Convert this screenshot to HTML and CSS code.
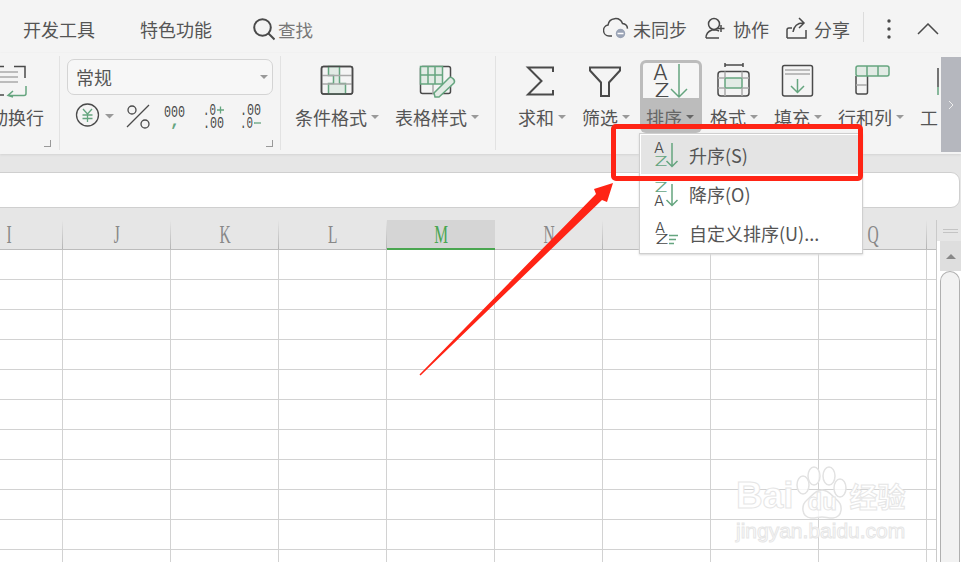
FILE: index.html
```html
<!DOCTYPE html>
<html lang="zh-CN">
<head>
<meta charset="utf-8">
<title>表格 排序</title>
<link rel="stylesheet" href="styles.css">
</head>
<body>
<div class="app">
  <header class="topbar">
    <nav class="tabs">
      <span class="tab">开发工具</span>
      <span class="tab">特色功能</span>
      <span class="search">
        <svg class="ic" width="23" height="26" viewBox="252 15 23 26"><circle cx="262.5" cy="26.5" r="8.3"/><path d="M268.5 32.5l6 6"/></svg>
        <span>查找</span>
      </span>
    </nav>
    <div class="actions">
      <span class="action sync">
        <svg class="ic thin" width="26" height="24" viewBox="603 18 26 24"><path d="M612 37h-3a5.500 5.500 0 0 1-1-10.900 7.500 7.500 0 0 1 14.500-1.500 5.500 5.500 0 0 1 5 5"/><circle class="solid" cx="620.500" cy="34.500" r="5.500"/><path class="knock" d="M617.500 34.500h6"/></svg>
        <span>未同步</span>
      </span>
      <span class="action team">
        <svg class="ic thin" width="21" height="24" viewBox="705 18 21 24"><circle cx="714" cy="25" r="5.500"/><path d="M706 39c0-5 3-7 6-8h4c1 0 2 .5 3 1M706 39h13M721 26v7M717.500 29.500h7"/></svg>
        <span>协作</span>
      </span>
      <span class="action share">
        <svg class="ic thin" width="22" height="24" viewBox="786 18 22 24"><path d="M787 39v-8c0-1 1-2 2-2h3M787 39h19v-8M793 33c1-6 5-9 10-9M799 19l5 5-5 5"/></svg>
        <span>分享</span>
      </span>
      <span class="top-sep"></span>
      <svg class="dots" width="6" height="22" viewBox="0 0 6 22"><circle cx="3" cy="3" r="1.700"/><circle cx="3" cy="11" r="1.700"/><circle cx="3" cy="19" r="1.700"/></svg>
      <svg class="ic thin collapse" width="22" height="12" viewBox="917 22 22 12"><path d="M918 33l10-10 10 10"/></svg>
    </div>
  </header>

  <section class="ribbon">
    <div class="group group-wrap">
      <svg class="ic thin" width="59" height="41" viewBox="0 60 59 41"><path class="mute" d="M0 72h18M0 77h18M0 82h18"/><path d="M14 66.500h11V78M0 66.500h4M0 95h4"/><path class="green" d="M26 86v7.500a2 2 0 0 1-2 2H9M13 91l-5 4.500 5 1.500"/></svg>
      <div class="label-clip"><span>自动换行</span></div>
      <span class="corner"></span>
    </div>

    <div class="group group-number">
      <div class="select"><span class="select-value">常规</span><span class="caret"></span></div>
      <svg class="num-row" width="206" height="32" viewBox="67 100 206 32">
        <circle class="line" cx="87.500" cy="115" r="11"/>
        <path class="green-line" d="M83 109l4.500 5 4.500-5M87.500 114v8M82.500 115h10M82.500 118.500h10"/>
        <path class="tri" d="M105 114h9l-4.500 4.500z"/>
        <circle class="line" cx="132" cy="110" r="4"/><circle class="line" cx="145" cy="124" r="4"/><path class="line" d="M127 127l22-22"/>
        <text class="num" x="164" y="117" textLength="21" lengthAdjust="spacingAndGlyphs">000</text>
        <text class="num comma" x="170" y="126">,</text>
        <text class="num" x="203" y="115" textLength="13" lengthAdjust="spacingAndGlyphs">.0</text>
        <path class="green-line" d="M217 110h7M220.500 106.500v7"/>
        <text class="num" x="203" y="128" textLength="21" lengthAdjust="spacingAndGlyphs">.00</text>
        <text class="num" x="240" y="115" textLength="21" lengthAdjust="spacingAndGlyphs">.00</text>
        <text class="num" x="240" y="128" textLength="13" lengthAdjust="spacingAndGlyphs">.0</text>
        <path class="green-line" d="M254 123h7"/>
      </svg>
      <span class="corner"></span>
    </div>

    <div class="group group-styles">
      <div class="tool auto">
        <svg class="ic thin" width="85" height="41" viewBox="295 60 85 41"><rect x="321.500" y="66.500" width="31" height="27.500" rx="2"/><path class="tint" d="M328.500 66.500h11v9h0v8h6v10.500h-17v-10.500h5v-8h-5z"/><path class="mute" d="M321.500 75.500h31M321.500 84h31"/><rect x="321.500" y="66.500" width="31" height="27.500" rx="2"/></svg>
        <div class="tool-label">条件格式<span class="caret"></span></div>
      </div>
      <div class="tool auto">
        <svg class="ic thin" width="85" height="41" viewBox="394 60 85 41"><rect x="419.500" y="66.500" width="30" height="27" rx="2"/><path class="mute" d="M432 84v10"/><path class="tint" d="M419.500 66.500h22v17.500h-22z"/><path class="green" d="M419.500 75h22M427 66.500v17.500M434 66.500v17.500"/><path class="tint" d="M434 97l-1-4 15-15c2-2 7 2 5 5l-15 14z"/></svg>
        <div class="tool-label">表格样式<span class="caret"></span></div>
      </div>
    </div>

    <div class="tools">
      <div class="tool">
        <svg class="ic thin" width="62" height="41" viewBox="512 60 62 41"><path class="heavy" d="M553 72v-4.500h-25l13.500 13.500-13.500 13.500h25V90"/></svg>
        <div class="tool-label">求和<span class="caret"></span></div>
      </div>
      <div class="tool">
        <svg class="ic thin" width="62" height="41" viewBox="576 60 62 41"><path class="heavy" d="M590 67.500h30v3l-11 12v13.500h-8V82.500l-11-12z"/></svg>
        <div class="tool-label">筛选<span class="caret"></span></div>
      </div>
      <div class="tool active">
        <svg class="ic thin tool-icon" width="62" height="41" viewBox="640 60 62 41"><text class="az" x="653" y="80">A</text><text class="az-z" x="654" y="97" textLength="16" lengthAdjust="spacingAndGlyphs">Z</text><path class="green" d="M679 64v33M671 89l8 8 8-8"/></svg>
        <div class="tool-label">排序<span class="caret"></span></div>
      </div>
      <div class="tool">
        <svg class="ic thin" width="62" height="41" viewBox="704 60 62 41"><path d="M725 65h18M725 63v4M743 63v4"/><rect x="718" y="71.500" width="31" height="24.500" rx="3"/><path class="tint" d="M725 78h17v10h-17z"/><path class="mute" d="M718 78h7M742 78h7M718 88h7M742 88h7M725 71.500v6M742 71.500v6M725 88v8M742 88v8"/></svg>
        <div class="tool-label">格式<span class="caret"></span></div>
      </div>
      <div class="tool">
        <svg class="ic thin" width="62" height="41" viewBox="768 60 62 41"><rect x="782.500" y="65.500" width="30" height="30.500" rx="2"/><path class="mute" d="M785 70h25M785 74h25"/><path class="green" d="M797.500 79v13M791 86l6.500 6.500 6.500-6.500"/></svg>
        <div class="tool-label">填充<span class="caret"></span></div>
      </div>
      <div class="tool wide">
        <svg class="ic thin" width="80" height="41" viewBox="832 60 80 41"><path d="M856 76v16c0 1.500 1 2 2 2h8c1 0 1.500-.5 1.500-2V76"/><path class="mute" d="M856 85h11"/><rect class="tint" x="856" y="66" width="33" height="10" rx="2"/><path class="green" d="M867 66v10M878 66v10"/></svg>
        <div class="tool-label">行和列<span class="caret"></span></div>
      </div>
      <div class="tool last">
        <svg class="ic thin" width="62" height="41" viewBox="914 60 62 41"><path d="M938 68v19"/><path class="green" d="M938 87v8"/></svg>
        <div class="tool-label">工</div>
      </div>
    </div>

    <div class="pager">
      <svg class="ic pager-ic" width="6" height="10" viewBox="0 0 6 10"><path d="M1 1l4 4-4 4"/></svg>
    </div>
  </section>

  <section class="workspace">
    <div class="formula-bar"></div>
    <div class="sheet">
      <div class="sheet-main">
        <div class="col-headers">
          <div class="col-head"><span>I</span></div>
          <div class="col-head"><span>J</span></div>
          <div class="col-head"><span>K</span></div>
          <div class="col-head"><span>L</span></div>
          <div class="col-head selected"><span>M</span></div>
          <div class="col-head"><span>N</span></div>
          <div class="col-head"><span>O</span></div>
          <div class="col-head"><span>P</span></div>
          <div class="col-head"><span>Q</span></div>
        </div>
        <div class="cells"></div>
      </div>
      <aside class="scrollbar">
        <div class="split"><span class="split-mark"></span></div>
        <div class="scroll-track">
          <div class="scroll-up"></div>
          <div class="scroll-thumb"></div>
        </div>
      </aside>
    </div>
  </section>
</div>

<div class="menu">
  <div class="menu-item hover">
    <svg class="ic thin" width="26" height="28" viewBox="0 0 26 28"><text class="az-s" x="0" y="12">A</text><text class="az-t green-text" x="0" y="25" textLength="14" lengthAdjust="spacingAndGlyphs">Z</text><path class="green" d="M18 2v23M12.500 20l5.500 5.500 5.500-5.500"/></svg>
    <span>升序(S)</span>
  </div>
  <div class="menu-item">
    <svg class="ic thin" width="26" height="28" viewBox="0 0 26 28"><text class="az-t green-text" x="0" y="12" textLength="14" lengthAdjust="spacingAndGlyphs">Z</text><text class="az-s" x="0" y="26">A</text><path class="green" d="M18 4v21M12.500 20l5.500 5.500 5.500-5.500"/></svg>
    <span>降序(O)</span>
  </div>
  <div class="menu-item">
    <svg class="ic thin" width="26" height="28" viewBox="0 0 26 28"><text class="az-s" x="1" y="14">A</text><text class="az-t" x="1" y="25" textLength="14" lengthAdjust="spacingAndGlyphs">Z</text><path class="green" d="M15 16.500h9M15 20.500h7M15 24.500h5"/></svg>
    <span>自定义排序(U)...</span>
  </div>
</div>

<div class="callout"></div>
<svg class="arrow" width="961" height="562" viewBox="0 0 961 562"><polygon points="419.500,374.500 596,194 594,189 613,183 607,202 602,200 420.500,375.500"/></svg>

<div class="watermark">
  <div class="wm-logo">
    <span>Bai</span>
    <span class="wm-paw">
      <svg width="52" height="60" viewBox="0 0 52 60"><ellipse cx="18" cy="14" rx="6" ry="9"/><ellipse cx="33" cy="14" rx="6" ry="9"/><ellipse cx="7" cy="23" rx="6" ry="9"/><ellipse cx="44" cy="26" rx="6" ry="9"/><path d="M26 28c-7 0-10 6-15 10-6 5-6 17 4 18 4 .5 7-1 11-1s7 1.500 11 1c10-1 10-13 4-18-5-4-8-10-15-10z"/></svg>
      <span class="wm-du">du</span>
    </span>
    <span class="wm-cn">经验</span>
  </div>
  <div class="wm-url">jingyan.baidu.com</div>
</div>
</body>
</html>
```

FILE: styles.css
```css
* { box-sizing: border-box; }
html, body { margin: 0; height: 562px; overflow: hidden; background: #fff; }
body { font-family: "Noto Sans CJK SC", "Noto Sans", sans-serif; color: #555; position: relative; font-size: 18px; }
svg { display: block; flex: none; }
.app { width: 961px; height: 562px; display: flex; flex-direction: column; overflow: hidden; }

/* icons */
.ic { fill: none; stroke: #4a4a4a; stroke-width: 2; }
.ic.thin { stroke-width: 1.500; }
.ic .heavy { stroke-width: 2; stroke-linejoin: miter; }
.ic .mute { stroke: #a9a9a9; }
.ic .green { stroke: #65a57f; }
.ic .tint { fill: #e2ebe5; stroke: #65a57f; }
.ic .solid { fill: #9aa3b5; stroke: #f4f4f4; }
.ic .knock { stroke: #fff; }
.ic text { stroke: none; fill: #4a4a4a; font-family: "Inter", sans-serif; font-weight: 300; }
.ic .az { font-size: 22px; }
.ic .az-z { font-size: 18px; }
.ic .az-s { font-size: 15px; }
.ic .az-t { font-size: 13px; }
.ic .green-text { fill: #65a57f; }

/* top bar */
.topbar { height: 53px; flex: none; background: #f4f4f4; display: flex; align-items: center; padding: 5px 22px 0 23px; }
.tabs { display: flex; align-items: center; gap: 45px; }
.search { display: flex; align-items: center; gap: 3px; margin-left: -5px; color: #777; font-size: 17.500px; }
.actions { margin-left: auto; display: flex; align-items: center; }
.action { display: flex; align-items: center; }
.sync { gap: 4px; }
.team { gap: 7px; margin-left: 18px; }
.share { gap: 6px; margin-left: 17px; }
.top-sep { width: 1px; height: 30px; background: #dcdcdc; margin: -5px 0 0 13px; }
.dots { fill: #4a4a4a; margin-left: 22px; }
.collapse { margin-left: 25px; }

/* ribbon */
.ribbon { height: 101px; flex: none; background: #f4f4f4; display: flex; align-items: flex-start; padding-top: 3px; box-shadow: 0 1px 2px #d4d4d4; position: relative; z-index: 1; }
.group { height: 94px; border-right: 1px solid #e2e2e2; flex: none; display: flex; }
.group-wrap { width: 60px; flex-direction: column; padding-top: 4px; overflow: hidden; }
.label-clip { height: 32px; display: flex; align-items: center; justify-content: flex-end; padding-right: 15px; white-space: nowrap; }
.corner { width: 7px; height: 7px; border-right: 1px solid #999; border-bottom: 1px solid #999; flex: none; align-self: flex-end; margin: auto 8px 3px 0; }
.group-number { width: 221px; flex-direction: column; padding: 3px 0 0 7px; }
.group-number .corner { margin-right: 7px; }
.select { width: 206px; height: 36px; flex: none; border: 1px solid #d4d4d4; border-radius: 7px; background: #f7f7f7; display: flex; align-items: center; justify-content: space-between; padding: 0 4px 0 8px; }
.select-value { color: #555; }
.num-row { margin-top: 5px; }
.num-row .line { fill: none; stroke: #4a4a4a; stroke-width: 1.300; }
.num-row .green-line { fill: none; stroke: #65a57f; stroke-width: 1.300; }
.num-row .tri { fill: #999; }
.num { font-family: "Liberation Mono", monospace; font-size: 17px; fill: #4a4a4a; }
.num.comma { fill: #65a57f; font-weight: 700; }

.group-styles { width: 215px; padding: 4px 0 0 14px; gap: 14px; }
.tools { flex: 1; min-width: 0; overflow: hidden; display: flex; height: 94px; padding: 4px 0 0 15px; }
.tool { width: 64px; flex: none; padding: 0 1px; height: 73px; display: flex; flex-direction: column; }
.tool.wide { width: 82px; }
.tool.auto { width: auto; padding: 0; }
.tool-label { height: 32px; display: flex; align-items: center; justify-content: center; gap: 4px; padding-right: 2px; white-space: nowrap; color: #555; }
.tool.last .tool-label { justify-content: flex-start; padding: 0 0 0 6px; }
.caret { width: 0; height: 0; flex: none; border: 4.500px solid transparent; border-top-color: #999; border-bottom-width: 0; }
.tool.active .tool-icon { box-shadow: inset 0 0 0 3px #bcbcbc; border-radius: 6px 6px 0 0; background: #f6f6f6; }
.tool.active .tool-label { background: #bcbcbc; border-radius: 0 0 6px 6px; color: #666; }
.tool.active .caret { border-top-color: #666; }
.pager { width: 20px; height: 95px; flex: none; margin-top: 1px; background: #b5b7be; display: flex; align-items: flex-end; justify-content: center; padding-bottom: 42px; }
.ic.pager-ic { stroke: #eee; stroke-width: 1; }

/* sheet */
.workspace { flex: 1; min-height: 0; background: #e6e6e6; padding-top: 18px; display: flex; flex-direction: column; }
.formula-bar { height: 36px; flex: none; margin: 0 1px 0 -10px; background: #fff; border: 1px solid #cfcfcf; border-radius: 9px; }
.sheet { flex: 1; min-height: 0; display: flex; padding-top: 12px; }
.sheet-main { width: 936px; flex: none; display: flex; flex-direction: column; overflow: hidden; }
.col-headers { height: 30px; flex: none; display: flex; margin-left: -45px; border-bottom: 1px solid #bcbcbc; }
.col-head { width: 108px; flex: none; display: flex; justify-content: center; font-family: "Liberation Serif", serif; font-size: 25px; line-height: 29px; color: #888; background: linear-gradient(#e6e6e6, #b4b4b4) right / 1px 100% no-repeat; }
.col-head span { display: block; transform: scaleX(.62); }
.col-head.selected { background: #d5d5d5; color: #4aa650; border-bottom: 2px solid #4aa650; height: 30px; }
.cells { flex: 1; background-color: #fff; background-image: linear-gradient(to left, #d2d2d2 1px, transparent 1px), linear-gradient(to top, #d2d2d2 1px, transparent 1px); background-size: 108px 30px; background-position: -45px 0; }
.scrollbar { flex: 1; min-width: 0; display: flex; flex-direction: column; border-left: 1px solid #cacaca; }
.split { height: 21px; flex: none; display: flex; align-items: center; padding: 0 3px 0 6px; }
.split-mark { flex: 1; height: 4px; border-top: 1px solid #c4c4c4; border-bottom: 1px solid #c4c4c4; }
.scroll-track { flex: 1; min-height: 0; background: #fff; display: flex; flex-direction: column; padding-left: 3px; }
.scroll-up { height: 30px; flex: none; background: #dedede; display: flex; align-items: center; justify-content: center; }
.scroll-up::before { content: ""; border: 5.500px solid transparent; border-bottom: 5.500px solid #888; border-top-width: 0; }
.scroll-thumb { flex: 1; margin-right: 1px; background: #f2f2f2; border: 1px solid #b0b0b0; border-bottom: 0; border-radius: 10px 10px 0 0; }

/* dropdown over the ribbon */
.menu { position: absolute; left: 639px; top: 133px; width: 224px; height: 121px; background: #fff; border: 1px solid #cfcfcf; box-shadow: 0 1px 2px #d8d8d8; padding: 1px 1px 0; z-index: 2; }
.menu-item { height: 39px; display: flex; align-items: center; padding-left: 13px; gap: 9px; color: #555; white-space: nowrap; }
.menu-item.hover { background: #e4e4e4; }

/* annotation */
.callout { position: absolute; left: 611px; top: 124px; width: 252px; height: 57px; border: 5px solid #ff2415; border-radius: 5px; z-index: 3; }
.arrow { position: absolute; left: 0; top: 0; z-index: 3; fill: #ff2415; }

/* watermark */
.watermark { position: absolute; left: 736px; top: 458px; width: 172px; z-index: 4; color: #fff; -webkit-text-stroke: 1px #e6e6e6; }
.wm-logo { display: flex; align-items: flex-end; height: 58px; font-family: "Liberation Sans", sans-serif; font-weight: 700; font-size: 37px; line-height: 40px; }
.wm-paw { width: 52px; height: 58px; position: relative; margin: 0 0 -4px 2px; flex: none; }
.wm-paw svg { fill: rgba(255,255,255,.8); stroke: #e2e2e2; stroke-width: 1.500; }
.wm-du { position: absolute; left: 12px; bottom: 0; font-size: 24px; line-height: 36px; }
.wm-cn { font-family: "Noto Sans CJK SC", sans-serif; font-size: 28px; margin-left: 2px; }
.wm-url { font-family: "Liberation Sans", sans-serif; font-size: 21px; line-height: 24px; margin-top: 3px; white-space: nowrap; }
```
